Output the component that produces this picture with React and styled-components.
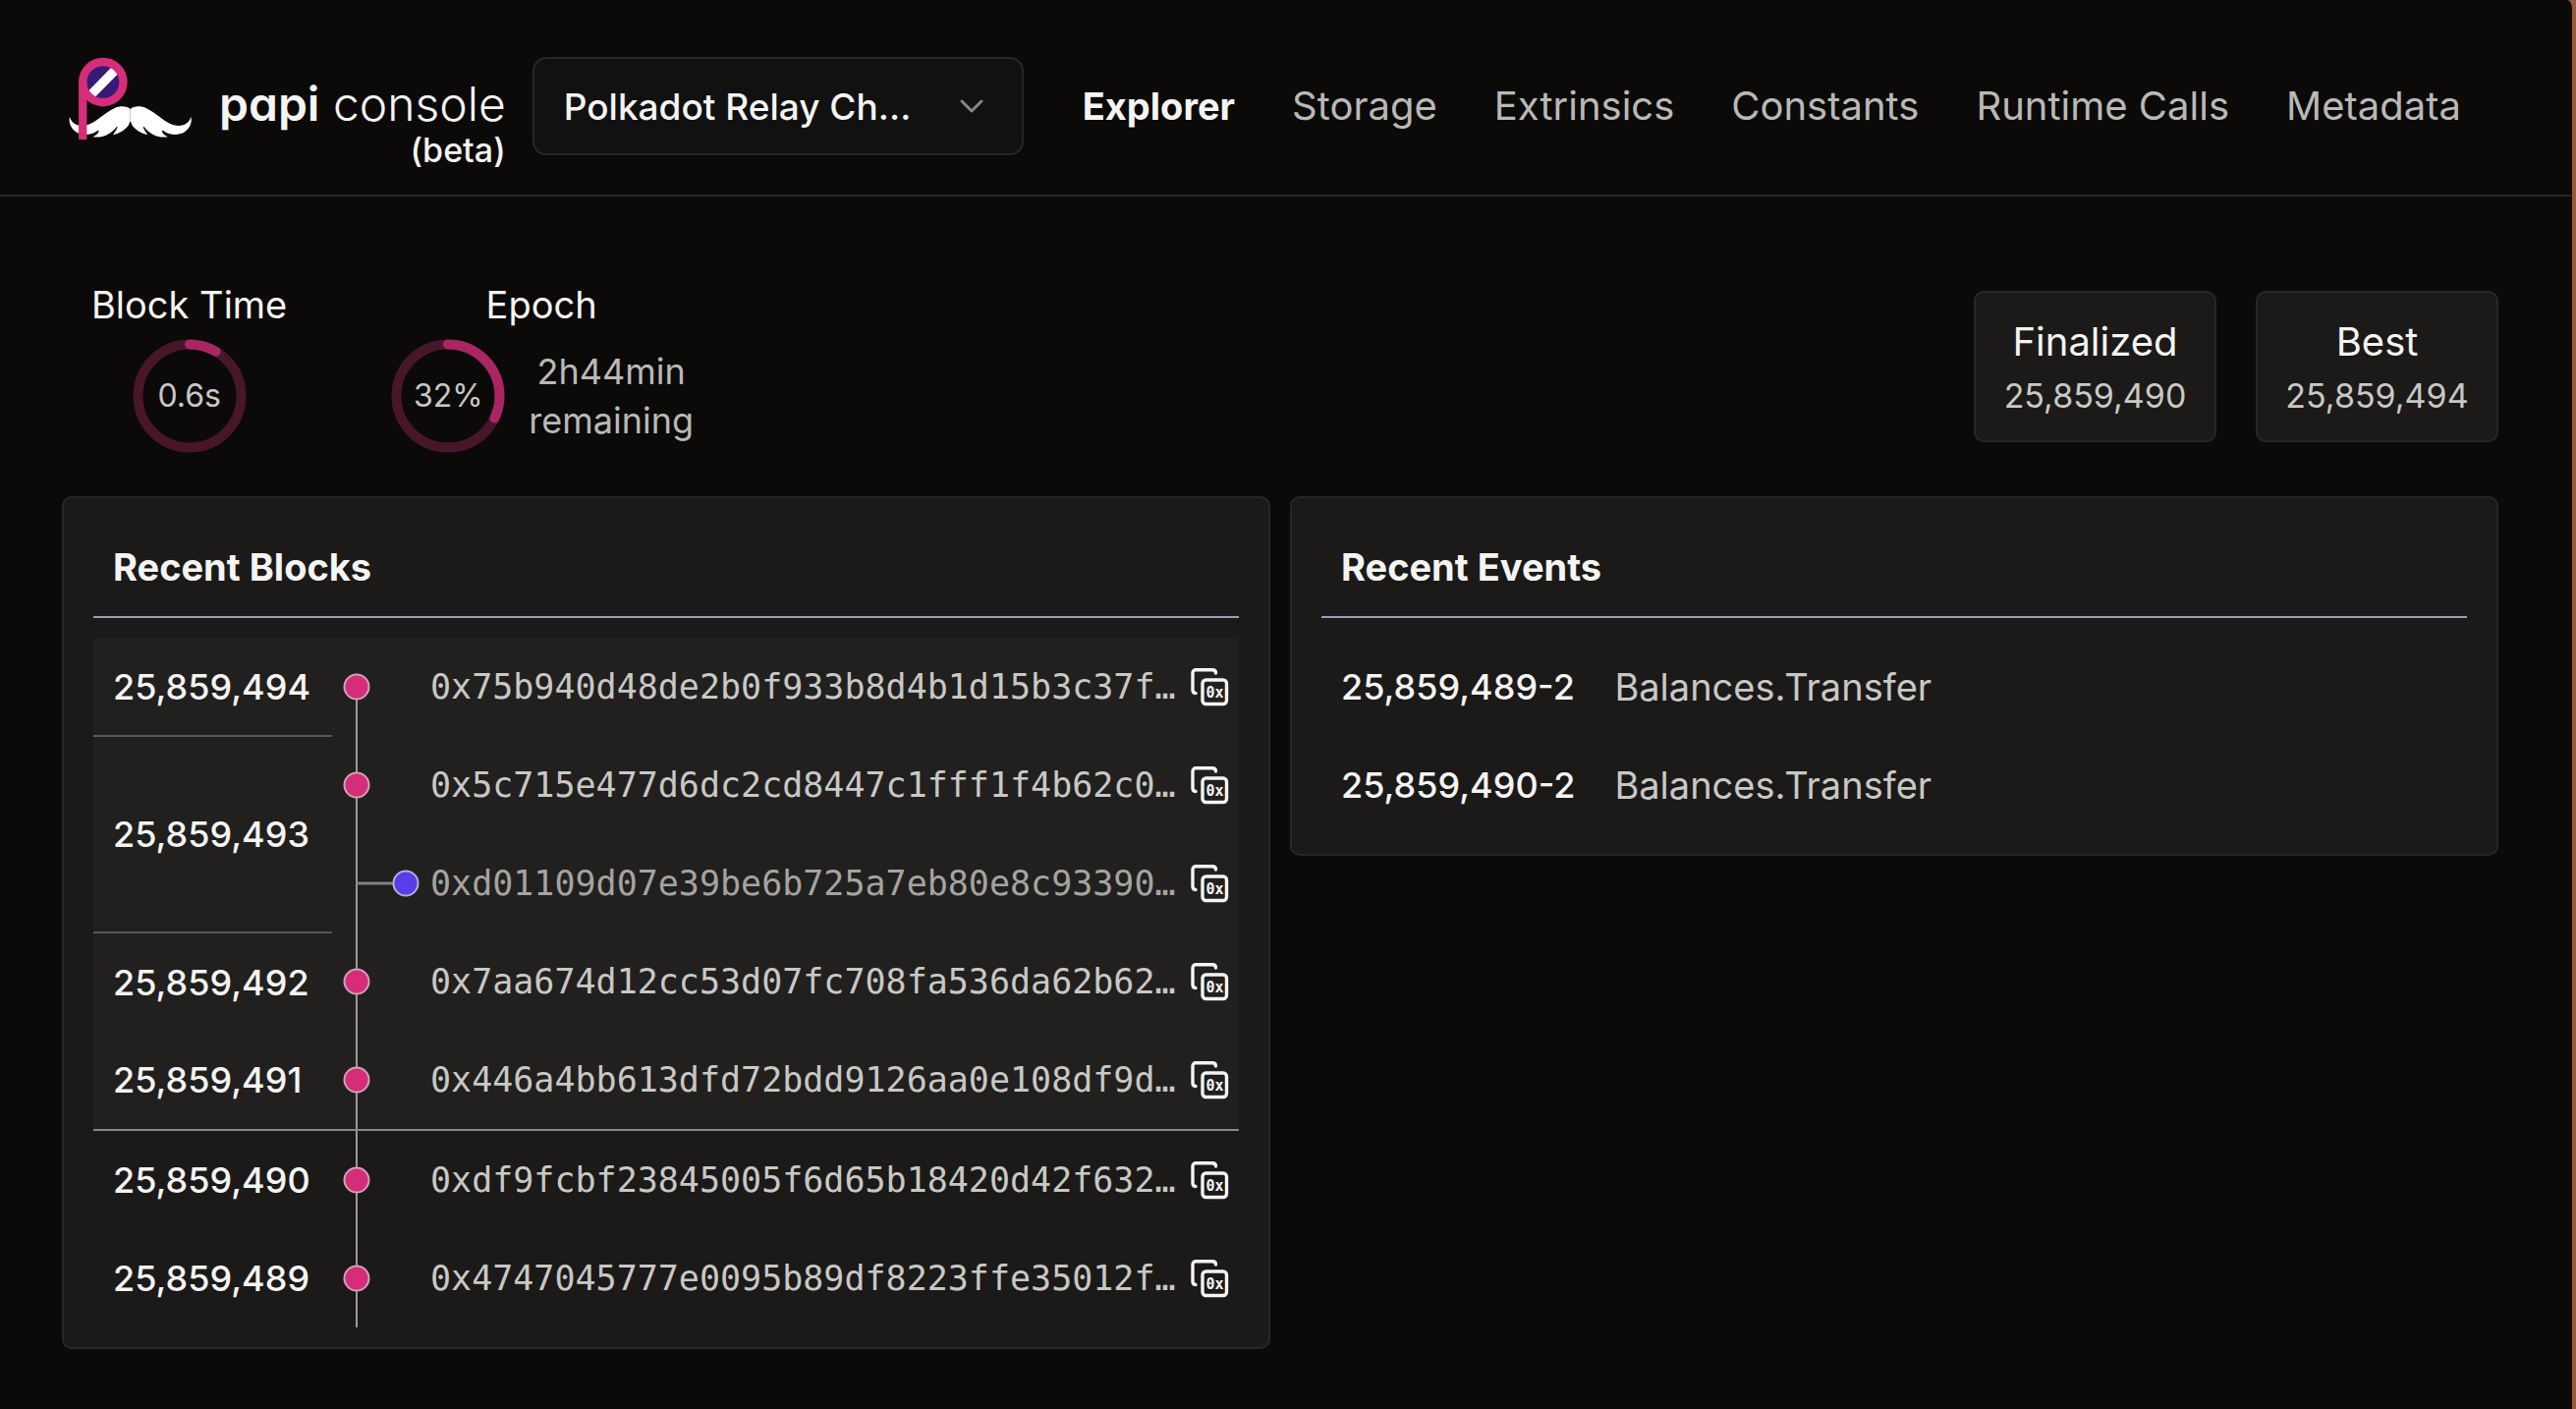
import React from "react";
import styled, { createGlobalStyle } from "styled-components";

const sans = `Inter, "Liberation Sans", sans-serif`;
const mono = `"DejaVu Sans Mono", monospace`;

const color = {
  page: "#0b0a08",
  card: "#1b1a18",
  pending: "#21201e",
  border: "#27272a",
  text: "#f4f4f3",
  muted: "#b9b9b7",
  value: "#c8c8c6",
  faded: "#a4a4a2",
  pink: "#d62d7b",
  violet: "#5b3de8",
  wire: "#9b9a98",
};

const GlobalStyle = createGlobalStyle`
  *, *::before, *::after { box-sizing: border-box; }
  body {
    margin: 0;
    background: #965b3d;
    color: ${color.text};
    font-family: ${sans};
    font-size: 38px;
    line-height: 60px;
  }
  a { color: inherit; text-decoration: none; }
`;

const Window = styled.div`
  min-height: 100vh;
  margin-right: 4px;
  background: ${color.page};
  border-top-right-radius: 5px 9px;
`;

/* ---------- header ---------- */

const Header = styled.header`
  display: flex;
  align-items: flex-start;
  height: 200px;
  padding: 58px 70px 0;
  border-bottom: 2px solid ${color.border};
`;

const Brand = styled.a`
  display: flex;
  align-items: flex-start;
  gap: 28px;
  margin-right: 27px;
`;

const Wordmark = styled.span`
  display: flex;
  flex-direction: column;
  align-items: flex-end;
  padding-top: 20px;
`;

const BrandName = styled.span`
  font-size: 48px;
  font-weight: 300;
  line-height: 56px;
  font-feature-settings: "cv11";
  white-space: nowrap;

  strong { font-weight: 600; }
`;

const BrandStage = styled.span`
  font-size: 34px;
  font-weight: 500;
  line-height: 38px;
`;

const ChainPicker = styled.label`
  display: grid;
  flex: 0 0 500px;
  align-items: center;
  margin-right: 60px;

  > * { grid-area: 1 / 1; }
  > svg { justify-self: end; margin-right: 40px; pointer-events: none; }
`;

const ChainSelect = styled.select`
  appearance: none;
  width: 100%;
  height: 100px;
  padding: 0 100px 0 30px;
  border: 2px solid ${color.border};
  border-radius: 14px;
  background: #111111;
  color: ${color.text};
  font-family: ${sans};
  font-size: 37px;
  font-weight: 500;
  text-overflow: ellipsis;
`;

const Nav = styled.nav`
  display: flex;
  gap: 58px;
  line-height: 100px;
  white-space: nowrap;
`;

const NavLink = styled.a`
  font-size: ${(p) => (p.$active ? 38 : 40)}px;
  font-weight: ${(p) => (p.$active ? 700 : 400)};
  color: ${(p) => (p.$active ? color.text : color.muted)};
`;

/* ---------- summary ---------- */

const Main = styled.main`
  padding: 80px 75px 60px 63px;
`;

const Summary = styled.section`
  display: flex;
  align-items: flex-end;
  justify-content: space-between;
  margin-bottom: 42px;
`;

const Gauges = styled.div`
  display: flex;
  gap: 104px;
  padding-left: 30px;
`;

const Gauge = styled.div`
  display: flex;
  flex-direction: column;
  align-items: center;
  gap: 3px;
`;

const GaugeBody = styled.div`
  display: flex;
  align-items: center;
  gap: 22px;
`;

const RingBox = styled.div`
  display: grid;
  place-items: center;

  > * { grid-area: 1 / 1; }
`;

const RingValue = styled.span`
  font-size: 32px;
  line-height: 40px;
  color: ${color.value};
`;

const Remaining = styled.div`
  font-size: 36px;
  line-height: 50px;
  text-align: center;
  color: ${color.muted};
`;

const Heights = styled.div`
  display: flex;
  gap: 40px;
  padding-bottom: 13px;
`;

const HeightCard = styled.div`
  min-width: 247px;
  padding: 20px;
  border: 2px solid ${color.border};
  border-radius: 10px;
  background: ${color.card};
  text-align: center;
`;

const HeightLabel = styled.div`
  font-size: 40px;
`;

const HeightValue = styled.div`
  font-size: 34px;
  line-height: 50px;
  color: ${color.value};
`;

/* ---------- panels ---------- */

const Panels = styled.div`
  display: grid;
  grid-template-columns: 1fr 1fr;
  align-items: start;
  gap: 20px;
`;

const Panel = styled.section`
  min-width: 0;
  padding: 30px 30px 20px;
  border: 2px solid ${color.border};
  border-radius: 10px;
  background: ${color.card};
`;

const PanelTitle = styled.h2`
  margin: 0 0 20px;
  padding: 10px 20px 20px;
  border-bottom: 2px solid #94a3b8;
  font-size: 38px;
  font-weight: 700;
  line-height: 60px;
`;

const BlocksTable = styled.table`
  width: 100%;
  table-layout: fixed;
  border-collapse: collapse;
`;

const NumberCol = styled.col`
  width: 243px;
`;

const GraphCol = styled.col`
  width: 100px;
`;

const BlockGroup = styled.tbody`
  background: ${(p) => (p.$pending ? color.pending : "transparent")};
  border-bottom: ${(p) => (p.$pending ? "2px solid #8a8986" : "0")};
`;

const NumberCell = styled.th`
  padding: 0 20px;
  border-bottom: ${(p) => (p.$ruled ? "2px solid #5a5957" : "0")};
  font-size: 36px;
  font-weight: 500;
  text-align: left;
`;

const GraphCell = styled.td`
  padding: 0;

  > svg { display: block; }
`;

const HashCell = styled.td`
  padding: 0 10px 0 0;
`;

const HashLine = styled.div`
  display: flex;
  align-items: center;
`;

const Hash = styled.code`
  flex: 1;
  min-width: 0;
  overflow: hidden;
  text-overflow: ellipsis;
  white-space: nowrap;
  font-family: ${mono};
  font-size: 35px;
  color: ${(p) => (p.$fork ? color.faded : color.value)};
`;

const CopyButton = styled.button`
  display: flex;
  padding: 0;
  border: 0;
  background: none;
  color: ${color.text};
  cursor: pointer;
`;

const EventsTable = styled.table`
  border-collapse: collapse;
`;

const EventNumber = styled.th`
  height: 100px;
  padding: 0 20px;
  font-size: 36px;
  font-weight: 500;
  text-align: left;
`;

const EventCell = styled.td`
  height: 100px;
  padding: 0 20px;
  color: ${color.value};
`;

/* ---------- drawings ---------- */

const HALF_MUSTACHE =
  "M249 212C258 202 280 201 295 208C330 224 355 256 388 262C412 265 430 252 433 235C438 254 428 273 412 283C392 293 368 291 350 278C346 275 343 277 346 282C349 288 355 293 363 296C335 300 310 290 291 266C286 262 287 270 302 290C280 285 264 274 254 260C252 256 251 250 249 250Z";

function Logo() {
  return (
    <svg width="125" height="84" viewBox="62 54 373 250" aria-hidden="true">
      <g fill="#fff">
        <path d={HALF_MUSTACHE} />
        <path d={HALF_MUSTACHE} transform="matrix(-1 0 0 1 498 0)" />
      </g>
      <clipPath id="lens">
        <circle cx="166" cy="130" r="50" />
      </clipPath>
      <g clipPath="url(#lens)">
        <rect x="110" y="75" width="112" height="112" fill="#371a78" />
        <path d="M112 186L220 76" stroke="#fff" strokeWidth="28" />
      </g>
      <circle cx="166" cy="130" r="61.5" fill="none" stroke={color.pink} strokeWidth="25" />
      <path d="M92 130H117V305H92Z" fill={color.pink} />
    </svg>
  );
}

function Chevron() {
  return (
    <svg width="26" height="16" viewBox="0 0 26 16" fill="none" aria-hidden="true">
      <path d="M3 3L13 13L23 3" stroke="#858585" strokeWidth="3" strokeLinecap="round" strokeLinejoin="round" />
    </svg>
  );
}

function Ring({ value, children }) {
  const length = 2 * Math.PI * 52.5;
  return (
    <RingBox>
      <svg width="120" height="120" viewBox="0 0 120 120" fill="none" strokeWidth="10" aria-hidden="true">
        <circle cx="60" cy="60" r="52.5" stroke="#48162a" />
        <circle
          cx="60"
          cy="60"
          r="52.5"
          stroke="#a92563"
          strokeLinecap="round"
          strokeDasharray={`${value * length} ${length}`}
          transform="rotate(-90 60 60)"
        />
      </svg>
      <RingValue>{children}</RingValue>
    </RingBox>
  );
}

function Graph({ first, fork }) {
  return (
    <svg width="100" height="100" viewBox="0 0 100 100" aria-hidden="true">
      <path d={first ? "M25 50V100" : "M25 0V100"} stroke={color.wire} strokeWidth="2" />
      {fork && <path d="M25 50H63" stroke="#82817f" strokeWidth="3" />}
      <circle
        cx={fork ? 75 : 25}
        cy="50"
        r="12.5"
        fill={fork ? color.violet : color.pink}
        stroke={fork ? "#b3aee0" : "#cfa3b6"}
        strokeWidth="2"
      />
    </svg>
  );
}

function CopyIcon() {
  return (
    <svg width="40" height="40" viewBox="0 0 40 40" fill="none" aria-hidden="true">
      <g stroke="currentColor" strokeWidth="3.4" strokeLinecap="round">
        <path d="M6 26.5C4 26.5 3 25 3 23V6C3 4 4.500 2.800 6 2.800H23C25.500 2.800 26.500 4 26.500 6" />
        <rect x="13" y="13" width="24.500" height="24.500" rx="3.500" />
      </g>
      <text
        x="25.500"
        y="31"
        textAnchor="middle"
        fontFamily="DejaVu Sans Mono, monospace"
        fontWeight="700"
        fontSize="15"
        fill="currentColor"
      >
        0x
      </text>
    </svg>
  );
}

/* ---------- data ---------- */

const sections = ["Explorer", "Storage", "Extrinsics", "Constants", "Runtime Calls", "Metadata"];

const pendingBlocks = [
  { number: "25,859,494", hash: "0x75b940d48de2b0f933b8d4b1d15b3c37f…", first: true, ruled: true },
  { number: "25,859,493", hash: "0x5c715e477d6dc2cd8447c1fff1f4b62c0…", span: 2, ruled: true },
  { hash: "0xd01109d07e39be6b725a7eb80e8c93390…", fork: true },
  { number: "25,859,492", hash: "0x7aa674d12cc53d07fc708fa536da62b62…" },
  { number: "25,859,491", hash: "0x446a4bb613dfd72bdd9126aa0e108df9d…" },
];

const finalizedBlocks = [
  { number: "25,859,490", hash: "0xdf9fcbf23845005f6d65b18420d42f632…" },
  { number: "25,859,489", hash: "0x4747045777e0095b89df8223ffe35012f…" },
];

const events = [
  { id: "25,859,489-2", name: "Balances.Transfer" },
  { id: "25,859,490-2", name: "Balances.Transfer" },
];

function BlockRow({ number, hash, first, fork, span, ruled }) {
  return (
    <tr>
      {number && (
        <NumberCell scope="row" rowSpan={span} $ruled={ruled}>
          <a href="#block">{number}</a>
        </NumberCell>
      )}
      <GraphCell>
        <Graph first={first} fork={fork} />
      </GraphCell>
      <HashCell>
        <HashLine>
          <Hash $fork={fork}>{hash}</Hash>
          <CopyButton type="button" aria-label="Copy hash">
            <CopyIcon />
          </CopyButton>
        </HashLine>
      </HashCell>
    </tr>
  );
}

export default function App() {
  return (
    <Window>
      <GlobalStyle />
      <Header>
        <Brand href="#home">
          <Logo />
          <Wordmark>
            <BrandName>
              <strong>papi</strong> console
            </BrandName>
            <BrandStage>(beta)</BrandStage>
          </Wordmark>
        </Brand>
        <ChainPicker>
          <ChainSelect aria-label="Chain">
            <option>Polkadot Relay Ch…</option>
          </ChainSelect>
          <Chevron />
        </ChainPicker>
        <Nav>
          {sections.map((name, i) => (
            <NavLink key={name} href="#section" $active={i === 0}>
              {name}
            </NavLink>
          ))}
        </Nav>
      </Header>

      <Main>
        <Summary>
          <Gauges>
            <Gauge>
              <span>Block Time</span>
              <Ring value={0.085}>0.6s</Ring>
            </Gauge>
            <Gauge>
              <span>Epoch</span>
              <GaugeBody>
                <Ring value={0.32}>32%</Ring>
                <Remaining>
                  2h44min
                  <br />
                  remaining
                </Remaining>
              </GaugeBody>
            </Gauge>
          </Gauges>
          <Heights>
            <HeightCard>
              <HeightLabel>Finalized</HeightLabel>
              <HeightValue>25,859,490</HeightValue>
            </HeightCard>
            <HeightCard>
              <HeightLabel>Best</HeightLabel>
              <HeightValue>25,859,494</HeightValue>
            </HeightCard>
          </Heights>
        </Summary>

        <Panels>
          <Panel>
            <PanelTitle>Recent Blocks</PanelTitle>
            <BlocksTable>
              <colgroup>
                <NumberCol />
                <GraphCol />
                <col />
              </colgroup>
              <BlockGroup $pending>
                {pendingBlocks.map((b) => (
                  <BlockRow key={b.hash} {...b} />
                ))}
              </BlockGroup>
              <BlockGroup>
                {finalizedBlocks.map((b) => (
                  <BlockRow key={b.hash} {...b} />
                ))}
              </BlockGroup>
            </BlocksTable>
          </Panel>

          <Panel>
            <PanelTitle>Recent Events</PanelTitle>
            <EventsTable>
              <tbody>
                {events.map((e) => (
                  <tr key={e.id}>
                    <EventNumber scope="row">
                      <a href="#event">{e.id}</a>
                    </EventNumber>
                    <EventCell>{e.name}</EventCell>
                  </tr>
                ))}
              </tbody>
            </EventsTable>
          </Panel>
        </Panels>
      </Main>
    </Window>
  );
}
